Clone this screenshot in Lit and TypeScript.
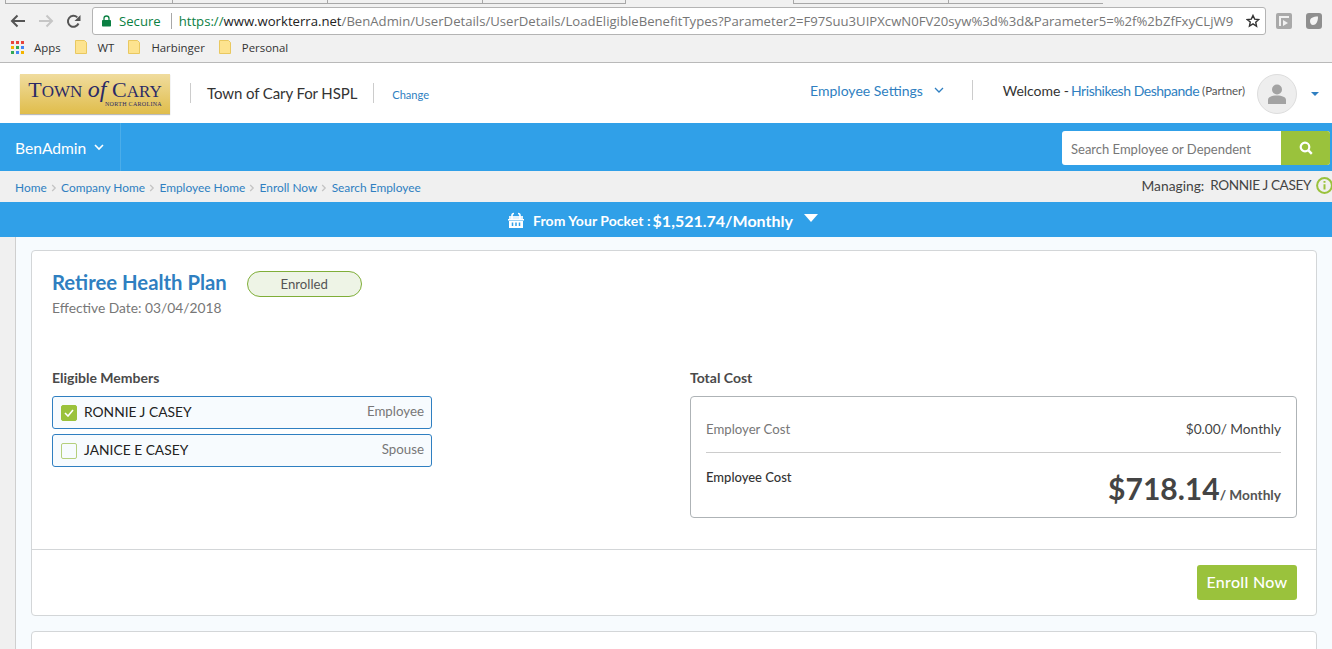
import { LitElement, html, css, svg } from "lit";
import { customElement } from "lit/decorators.js";

const chev = svg`<svg width="8" height="8" viewBox="0 0 8 8"><path d="M2.2 1 5.2 4 2.2 7" fill="none" stroke="#c4c4c4" stroke-width="1.3"/></svg>`;

@customElement("app-root")
export class AppRoot extends LitElement {
  static styles = css`
    :host { display: block; width: 1332px; height: 649px; overflow: hidden; font-family: Lato, "Open Sans", sans-serif; color: #444; background: #fff; }
    * { box-sizing: border-box; }
    .chrome { height: 63px; background: #f1f1f1; border-bottom: 1px solid #b9b9b9; font-family: "Open Sans", "Noto Sans", sans-serif; }
    .tabs { height: 6px; display: flex; padding-left: 5px; }
    .tabs i { display: block; height: 4px; border-left: 1px solid #a8a8a8; border-bottom: 1px solid #a8a8a8; }
    .tabs i.w1 { width: 167px; } .tabs i.w2 { width: 155px; } .tabs i.w3 { width: 144px; border-right: 1px solid #a8a8a8; }
    .tabs i.gap { width: 167px; border: 0; }
    .toolbar { height: 30px; display: flex; align-items: center; padding: 0 0 0 10px; }
    .nav { display: flex; gap: 12px; width: 82px; align-items: center; }
    .omni { width: 1174px; height: 28px; background: #fff; border: 1px solid #b4b4b4; border-radius: 3px; display: flex; align-items: center; padding: 0 5px 0 9px; font-size: 13.15px; white-space: nowrap; overflow: hidden; }
    .sec { color: #0b8043; margin-left: 8px; }
    .sep { width: 1px; height: 16px; background: #a8a8a8; margin: 0 7px 0 10px; flex: none; }
    .url { flex: 1; overflow: hidden; color: #767676; }
    .url b { font-weight: 400; color: #0b8043; } .url em { font-style: normal; color: #222; }
    .ext { display: flex; gap: 14px; margin-left: 10px; }
    .bookmarks { height: 26px; display: flex; align-items: center; padding: 0 0 4px 11px; font-size: 11.4px; color: #333; }
    .bm { display: flex; align-items: center; gap: 11px; margin-right: 14px; }
    .bm.apps { gap: 10px; }
    .top { height: 60px; display: flex; align-items: center; position: relative; padding-left: 20px; }
    .logo { width: 150px; height: 40px; margin-top: 1px; background: linear-gradient(#f0dc9e, #e0bd4b); box-shadow: 0 1px 1px #bbb; display: flex; flex-direction: column; justify-content: center; align-items: center; font-family: "Liberation Serif", serif; color: #2b2a66; position: relative; }
    .logo .a { font-size: 22px; line-height: 22px; white-space: nowrap; margin-top: -6px; }
    .logo .a small { font-size: 17px; } .logo .a i { font-size: 24px; }
    .logo .b { font-size: 6px; position: absolute; right: 8px; bottom: 6px; letter-spacing: 0.3px; line-height: 7px; }
    .org { margin-left: 20px; padding: 0 16px; border-left: 1px solid #ccc; border-right: 1px solid #ccc; height: 20px; line-height: 20px; font-size: 15px; letter-spacing: -0.1px; color: #333; white-space: nowrap; }
    .change { margin-left: 18px; color: #2f7fc1; font-size: 11.1px; margin-top: 3px; }
    .top .right { margin-left: auto; display: flex; align-items: center; }
    .settings { color: #2f7fc1; font-size: 14px; display: flex; align-items: center; gap: 11px; margin-right: 28px; margin-top: -6px; white-space: nowrap; }
    .welcome { border-left: 1px solid #ccc; height: 20px; padding-left: 30px; display: flex; align-items: center; font-size: 14px; letter-spacing: -0.05px; color: #333; white-space: nowrap; margin-top: -6px; }
    .welcome a { color: #2f7fc1; margin-left: 2px; letter-spacing: -0.47px; } .welcome small { font-size: 11.5px; color: #555; margin-left: 3px; }
    .avatar { width: 40px; height: 40px; border-radius: 50%; background: #eee; border: 1px solid #ddd; margin-left: 12px; display: flex; align-items: center; justify-content: center; margin-top: 1px; }
    .caret { margin: 2px 13px 0 14px; width: 0; height: 0; border: 4px solid transparent; border-top: 4px solid #2f7fc1; border-bottom: 0; }
    .blue { height: 48px; background: #30a0e8; display: flex; align-items: center; color: #fff; }
    .ben { width: 121px; height: 48px; border-right: 1px solid #4bade9; display: flex; align-items: center; padding: 1px 0 0 15px; gap: 8px; font-size: 15.6px; }
    .search { margin-left: auto; margin-right: 2px; margin-top: 2px; display: flex; width: 268px; height: 34px; border-radius: 3px; overflow: hidden; background: #fff; }
    .search span { flex: 1; padding: 1px 0 0 9px; line-height: 34px; font-size: 13px; color: #777; white-space: nowrap; }
    .search b { width: 49px; background: #9ac23c; display: flex; align-items: center; justify-content: center; }
    .crumb { height: 31px; background: #f0f0f0; display: flex; position: relative; padding-left: 15px; font-size: 11.9px; color: #2f7fc1; }
    .trail { display: flex; align-items: center; gap: 3.2px; height: 100%; margin-top: 1px; white-space: nowrap; }
    .managing { margin-left: auto; display: flex; gap: 6px; font-size: 13.8px; color: #444; align-items: center; height: 28px; white-space: nowrap; margin-right: -1px; }
    .managing .n { font-size: 13.6px; letter-spacing: -0.38px; margin-right: -1px; }
    .pocket { height: 35px; background: #30a0e8; color: #fff; display: flex; align-items: center; justify-content: center; font-weight: 700; font-size: 14px; letter-spacing: 0.05px; padding: 1px 6px 0 0; }
    .pocket .amt { font-size: 16px; margin-left: 2px; letter-spacing: 0; }
    .pocket .tri { width: 0; height: 0; border-left: 7.5px solid transparent; border-right: 7.5px solid transparent; border-top: 8px solid #fff; margin: 0 0 4px 11px; }
    .pocket svg { margin-right: 9px; }
    .main { display: flex; height: 412px; }
    .side { width: 16px; background: #f0f0f0; border-right: 1px solid #cfcfcf; }
    .content { flex: 1; background: #f7fbfe; padding: 13px 15px 0 15px; overflow: hidden; }
    .card { background: #fff; border: 1px solid #d3d6d8; border-radius: 4px; margin-bottom: 15px; }
    .card.one { height: 366px; display: flex; flex-direction: column; }
    .card.two { height: 40px; }
    .body { height: 298px; padding: 19px 19px 0 20px; }
    .head { display: flex; align-items: flex-start; }
    .title { font-size: 20.3px; font-weight: 700; line-height: 24px; color: #2f7fc1; white-space: nowrap; }
    .date { font-size: 13.8px; line-height: 18px; margin-top: 5px; color: #777; white-space: nowrap; }
    .pill { width: 115px; height: 26px; margin: 1px 0 0 20px; border: 1px solid #7fae38; border-radius: 13px; background: #eef4e6; text-align: center; line-height: 24px; font-size: 13.2px; color: #555; }
    .cols { display: flex; margin-top: 52px; }
    .left { width: 380px; flex: none; }
    .right-col { width: 607px; margin-left: 258px; flex: none; }
    h4 { margin: 0 0 9px; font-size: 14px; line-height: 18px; font-weight: 700; color: #4a4a4a; }
    .member { height: 33px; border: 1px solid #2f7fc1; border-radius: 3px; background: #f7fbfe; display: flex; align-items: center; padding: 0 7px 2px 8px; margin-bottom: 5px; font-size: 13.8px; color: #222; }
    .box { width: 16px; height: 16px; border-radius: 2px; border: 1px solid #b5cf7c; margin: 2px 7px 0 0; display: flex; align-items: center; justify-content: center; }
    .box.on { background: #9ac23c; border-color: #9ac23c; }
    .member .rel { margin-left: auto; color: #777; font-size: 13.3px; margin-top: -1px; }
    .cost { border: 1px solid #aeb3b6; border-radius: 4px; height: 122px; padding: 0 15px; }
    .row1 { height: 56px; border-bottom: 1px solid #ccc; display: flex; justify-content: space-between; align-items: center; font-size: 13.7px; padding-top: 9px; }
    .row1 span:first-child { color: #777; font-size: 13.2px; }
    .row1 span:last-child { margin-bottom: 2px; }
    .row2 { display: flex; justify-content: space-between; padding-top: 16px; font-size: 13px; color: #333; font-weight: 500; }
    .price { font-size: 13.7px; color: #555; font-weight: 700; white-space: nowrap; display: flex; align-items: baseline; }
    .price b { font-size: 30px; line-height: 38px; color: #444; font-weight: 700; }
    .foot { flex: 1; border-top: 1px solid #d3d6d8; display: flex; justify-content: flex-end; align-items: flex-start; padding: 15px 19px 0 0; }
    .btn { width: 100px; height: 35px; padding-bottom: 2px; border-radius: 3px; background: #9ac23c; color: #fff; font-size: 16px; font-weight: 500; display: flex; align-items: center; justify-content: center; letter-spacing: 0.3px; }
  `;

  folder() {
    return html`<svg width="12" height="14" viewBox="0 0 12 14"><path d="M.5.5h9l2 2v11H.5z" fill="#fde38f" stroke="#e9c860"/></svg>`;
  }

  render() {
    return html`
      <div class="chrome">
        <div class="tabs"><i class="w1"></i><i class="w2"></i><i class="w2"></i><i class="w3"></i><i class="gap"></i><i class="w2"></i><i class="w2"></i></div>
        <div class="toolbar">
          <div class="nav">
            <svg width="16" height="14" viewBox="0 0 16 14"><path d="M15 7H2M7.5 1.500 2 7l5.500 5.500" fill="none" stroke="#555" stroke-width="2"/></svg>
            <svg width="16" height="14" viewBox="0 0 16 14"><path d="M1 7h13M8.500 1.500 14 7l-5.500 5.500" fill="none" stroke="#c6c6c6" stroke-width="2"/></svg>
            <svg width="15" height="15" viewBox="0 0 15 15"><path d="M12.500 9.500A5.500 5.500 0 1 1 11.300 3.400" fill="none" stroke="#555" stroke-width="2"/><path d="M14.500 1v6h-6z" fill="#555"/></svg>
          </div>
          <div class="omni">
            <svg width="9" height="12" viewBox="0 0 9 12"><path d="M2 5V3.500a2.500 2.500 0 0 1 5 0V5" fill="none" stroke="#0b8043" stroke-width="1.300"/><rect y="5" width="9" height="6.500" rx=".8" fill="#0b8043"/></svg>
            <span class="sec">Secure</span><span class="sep"></span>
            <span class="url"><b>https://</b><em>www.workterra.net</em>/BenAdmin/UserDetails/UserDetails/LoadEligibleBenefitTypes?Parameter2=F97Suu3UIPXcwN0FV20syw%3d%3d&amp;Parameter5=%2f%2bZfFxyCLjW9</span>
            <svg width="14" height="14" viewBox="0 0 24 24" style="flex:none;margin-left:4px"><path d="m12 2.500 2.900 6.300 6.900.8-5.100 4.700 1.400 6.800L12 17l-6.100 3.600 1.400-6.800L2.200 9.600l6.900-.8z" fill="none" stroke="#333" stroke-width="2.400"/></svg>
          </div>
          <div class="ext">
            <svg width="16" height="16" viewBox="0 0 16 16"><rect width="16" height="16" rx="2" fill="#a9a9a9"/><path d="M3 3h10v2H5v8H3zM7 7l5 3-5 3z" fill="#f1f1f1"/></svg>
            <svg width="16" height="16" viewBox="0 0 16 16"><rect width="16" height="16" rx="3" fill="#8f8f8f"/><path d="M4 8c0-3 3-4.500 8-4.500C12 9 10 12 7 12c-2 0-3-2-3-4z" fill="#f4f4f4"/></svg>
          </div>
        </div>
        <div class="bookmarks">
          <span class="bm apps">
            <svg width="13" height="13" viewBox="0 0 13 13"><g><rect width="3" height="3" fill="#e8453c"/><rect x="5" width="3" height="3" fill="#e8453c"/><rect x="10" width="3" height="3" fill="#e8453c"/><rect y="5" width="3" height="3" fill="#f4b400"/><rect x="5" y="5" width="3" height="3" fill="#34a853"/><rect x="10" y="5" width="3" height="3" fill="#4285f4"/><rect y="10" width="3" height="3" fill="#34a853"/><rect x="5" y="10" width="3" height="3" fill="#4285f4"/><rect x="10" y="10" width="3" height="3" fill="#f4b400"/></g></svg>
            Apps</span>
          <span class="bm">${this.folder()}WT</span>
          <span class="bm">${this.folder()}Harbinger</span>
          <span class="bm">${this.folder()}Personal</span>
        </div>
      </div>
      <div class="top">
        <div class="logo"><div class="a">T<small>OWN</small> <i>of</i> C<small>ARY</small></div><div class="b">NORTH CAROLINA</div></div>
        <div class="org">Town of Cary For HSPL</div>
        <span class="change">Change</span>
        <div class="right">
          <div class="settings">Employee Settings
            <svg width="10" height="7" viewBox="0 0 10 7"><path d="m1 1 4 4 4-4" fill="none" stroke="#2f7fc1" stroke-width="1.300"/></svg></div>
          <div class="welcome">Welcome - <a>Hrishikesh Deshpande</a><small>(Partner)</small></div>
          <div class="avatar"><svg width="18" height="20" viewBox="0 0 18 20"><circle cx="9" cy="5.500" r="5" fill="#a3a3a3"/><path d="M0 20v-4c0-3 4-4.500 9-4.500s9 1.500 9 4.500v4z" fill="#a3a3a3"/></svg></div>
          <div class="caret"></div>
        </div>
      </div>
      <div class="blue">
        <div class="ben">BenAdmin <svg width="10" height="7" viewBox="0 0 10 7"><path d="m1 1 4 4 4-4" fill="none" stroke="#fff" stroke-width="1.600"/></svg></div>
        <div class="search"><span>Search Employee or Dependent</span><b>
          <svg width="14" height="14" viewBox="0 0 14 14"><circle cx="6" cy="6" r="4.300" fill="none" stroke="#fff" stroke-width="2.200"/><path d="m9.200 9.200 3.600 3.600" stroke="#fff" stroke-width="2.400"/></svg></b></div>
      </div>
      <div class="crumb">
        <div class="trail">Home ${chev} Company Home ${chev} Employee Home ${chev} Enroll Now ${chev} Search Employee</div>
        <div class="managing">Managing: <span class="n">RONNIE J CASEY</span>
          <svg width="17" height="17" viewBox="0 0 17 17"><circle cx="8.500" cy="8.500" r="7.400" fill="none" stroke="#9ac23c" stroke-width="2"/><path d="M8.500 4v1.800M8.500 7.200v5.300" stroke="#9ac23c" stroke-width="2"/></svg></div>
      </div>
      <div class="pocket">
        <svg width="16" height="16" viewBox="0 0 16 16"><path d="M0 7h16v1.500H0zM1 9h14v7H1z" fill="#fff"/><path d="M4 7V3.500C4 2 5 1.500 6 1.500M12 7V3.500c0-1.500-1-2-2-2" fill="none" stroke="#fff" stroke-width="1.600"/><path d="M1 4h14v3H1z" fill="#fff" opacity=".85"/><path d="M4.500 10.500v3.500M8 10.500v3.500M11.500 10.500v3.500" stroke="#30a0e8" stroke-width="1.500"/></svg>
        From Your Pocket : <span class="amt">$1,521.74/Monthly</span><span class="tri"></span>
      </div>
      <div class="main">
        <div class="side"></div>
        <div class="content">
          <div class="card one">
            <div class="body">
              <div class="head">
                <div><div class="title">Retiree Health Plan</div><div class="date">Effective Date: 03/04/2018</div></div>
                <div class="pill">Enrolled</div>
              </div>
              <div class="cols">
                <div class="left">
                  <h4>Eligible Members</h4>
                  <div class="member"><span class="box on"><svg width="10" height="8" viewBox="0 0 10 8"><path d="m1 4 3 3 5-6" fill="none" stroke="#fff" stroke-width="1.600"/></svg></span>RONNIE J CASEY<span class="rel">Employee</span></div>
                  <div class="member"><span class="box"></span>JANICE E CASEY<span class="rel">Spouse</span></div>
                </div>
                <div class="right-col">
                  <h4>Total Cost</h4>
                  <div class="cost">
                    <div class="row1"><span>Employer Cost</span><span>$0.00/ Monthly</span></div>
                    <div class="row2"><span>Employee Cost</span><span class="price"><b>$718.14</b>/ Monthly</span></div>
                  </div>
                </div>
              </div>
            </div>
            <div class="foot"><div class="btn">Enroll Now</div></div>
          </div>
          <div class="card two"></div>
        </div>
      </div>
    `;
  }
}
